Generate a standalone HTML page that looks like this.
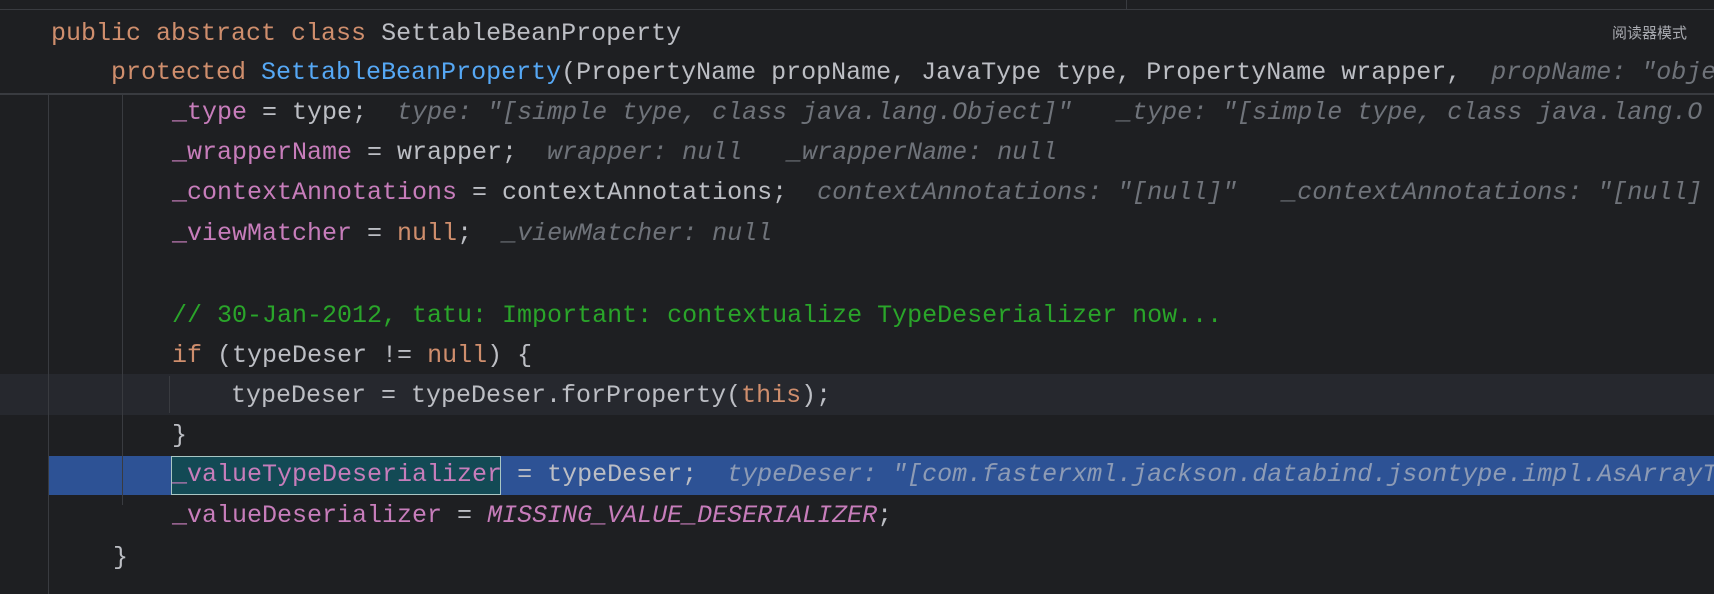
<!DOCTYPE html>
<html><head><meta charset="utf-8"><style>
html,body{margin:0;padding:0;background:#1e1f22;}
body{width:1714px;height:594px;position:relative;overflow:hidden;font-family:"Liberation Mono",monospace;font-size:25px;color:#bcbec4;}
.topbar{position:absolute;left:0;top:0;width:1714px;height:9px;border-bottom:1px solid #393b40;}
.tv{position:absolute;left:1126px;top:0;width:1px;height:9px;background:#393b40;}
.sticky{position:absolute;left:0;top:10px;width:1714px;height:83px;border-bottom:2px solid #393b40;}
.ln{position:absolute;white-space:pre;height:40px;line-height:40px;}
.k{color:#cf8e6d}.f{color:#c77dbb}.m{color:#56a8f5}.c{color:#2aa52a}
.h{color:#6f737a;font-style:italic}
.fi{color:#c77dbb;font-style:italic}
.reader{position:absolute;left:1612px;top:22px;font-family:"Noto Sans CJK SC",sans-serif;font-size:15px;color:#a8aab0;}
.vl{position:absolute;width:1px;background:#393b40;}
.cur{position:absolute;left:0;top:374px;width:1714px;height:41px;background:#26282e;}
.sel{position:absolute;left:48px;top:456px;width:1666px;height:39px;background:#2d5295;}
.box{position:absolute;left:171px;top:456px;width:328px;height:37px;background:#134a55;border:1px solid #a9c6c4;}
</style></head><body>
<div class="topbar"></div><div class="tv"></div>
<div class="sticky"></div>
<div class="reader">阅读器模式</div>
<div class="cur"></div>
<div class="sel"></div>
<div class="box"></div>
<div class="vl" style="left:48px;top:95px;height:499px"></div>
<div class="vl" style="left:122px;top:95px;height:410px;"></div>
<div class="vl" style="left:169px;top:376px;height:37px"></div>

<div class="ln" style="left:51px;top:14px"><span class="k">public abstract class </span>SettableBeanProperty</div>
<div class="ln" style="left:111px;top:53px"><span class="k">protected </span><span class="m">SettableBeanProperty</span>(PropertyName propName, JavaType type, PropertyName wrapper,  <span class="h">propName: "obje</span></div>

<div class="ln" style="left:172px;top:93px"><span class="f">_type</span> = type;  <span class="h">type: "[simple type, class java.lang.Object]"   _type: "[simple type, class java.lang.O</span></div>
<div class="ln" style="left:172px;top:133px"><span class="f">_wrapperName</span> = wrapper;  <span class="h">wrapper: null   _wrapperName: null</span></div>
<div class="ln" style="left:172px;top:173px"><span class="f">_contextAnnotations</span> = contextAnnotations;  <span class="h">contextAnnotations: "[null]"   _contextAnnotations: "[null]</span></div>
<div class="ln" style="left:172px;top:214px"><span class="f">_viewMatcher</span> = <span class="k">null</span>;  <span class="h">_viewMatcher: null</span></div>
<div class="ln" style="left:172px;top:296px"><span class="c">// 30-Jan-2012, tatu: Important: contextualize TypeDeserializer now...</span></div>
<div class="ln" style="left:172px;top:336px"><span class="k">if</span> (typeDeser != <span class="k">null</span>) {</div>
<div class="ln" style="left:231px;top:376px">typeDeser = typeDeser.forProperty(<span class="k">this</span>);</div>
<div class="ln" style="left:172px;top:416px">}</div>
<div class="ln" style="left:172px;top:455px"><span class="f">_valueTypeDeserializer</span> = typeDeser;  <span class="h" style="color:#8d9bb5">typeDeser: "[com.fasterxml.jackson.databind.jsontype.impl.AsArrayT</span></div>
<div class="ln" style="left:172px;top:496px"><span class="f">_valueDeserializer</span> = <span class="fi">MISSING_VALUE_DESERIALIZER</span>;</div>
<div class="ln" style="left:113px;top:538px">}</div>
</body></html>
